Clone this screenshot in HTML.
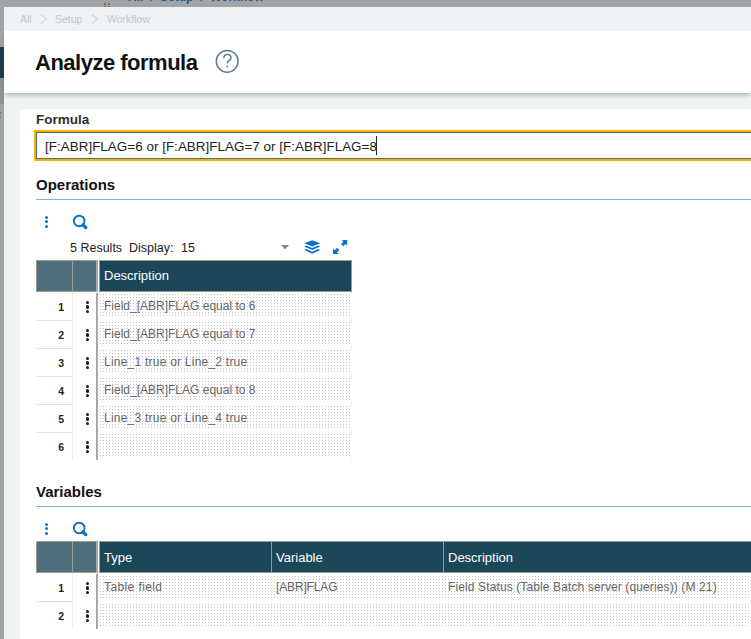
<!DOCTYPE html>
<html><head><meta charset="utf-8">
<style>
*{box-sizing:border-box;margin:0;padding:0}
html,body{width:751px;height:639px;overflow:hidden}
body{position:relative;background:#a2a3a5;font-family:"Liberation Sans",sans-serif;color:#222}
.a{position:absolute}
.nw{white-space:nowrap}
#topcrumb{left:128px;top:-10px;font-size:12px;color:#1a5a94;font-weight:bold}
#modal{left:4px;top:7px;width:747px;height:632px;background:#eff3f4}
#crumb{left:4px;top:7px;width:747px;height:24px;background:#f0f3f5}
.cr{top:13px;font-size:10.5px;color:#c2c7cb}
#header{left:4px;top:31px;width:747px;height:62px;background:#fff;box-shadow:0 3px 4px -1px rgba(30,50,60,.34)}
#title{left:35px;top:50px;letter-spacing:-0.5px;font-size:22px;font-weight:bold;color:#111}
#help{left:215px;top:49px;width:25px;height:25px;border:1.5px solid #66869a;border-radius:50%;color:#66869a;font-size:17px;text-align:center;line-height:22px}
#panel{left:20px;top:109px;width:731px;height:530px;background:#fff}
.lbl{font-size:13.5px;font-weight:bold;color:#2e2e2e}
.h2{font-size:15px;font-weight:bold;color:#111}
.uline{height:1px;background:#7fb5e2}
#inp{left:34px;top:130px;width:720px;height:31px;border:2px solid #f8b100;}
#inp div{position:absolute;left:0;top:0;right:0;bottom:0;border:1px solid #4e6b78;background:#fff}
#inp span{position:absolute;left:8px;top:6px;font-size:13.4px;letter-spacing:0.04px;color:#222}
.bd i{position:absolute;left:0.6px;width:3px;height:3px;border-radius:50%;background:#0e72c4}
.kd i{position:absolute;left:0.2px;width:3.3px;height:3.3px;border-radius:50%;background:#1a1a1a}
.th{background:#1a4859;height:32px;border:1px solid #979b8e}
.tn{background:#4f6e7b;height:32px;border:1px solid #9a9e90}
.dot{background:linear-gradient(to bottom,transparent 1px,#fff 1px) 0 0/3px 3px,linear-gradient(to right,transparent 1px,#fff 1px) 0 0/3px 3px,#c4c4c4}
.cell{font-size:12px;color:#666}
.hc{font-size:13px;color:#fff}
.rn{font-size:10.5px;font-weight:bold;color:#222;text-align:right;width:20px}
.hl{height:1px;background:#e4e4e4}
.vl{width:1px;background:#ececec}
.gb{width:2px;background:#a6a6a6}
.sep{width:1px;background:#8d9a9a}
</style></head><body>
<div id="topcrumb" class="a nw">All &nbsp;/&nbsp; Setup &nbsp;/&nbsp; Workflow</div>
<div class="a" style="left:104px;top:3px;width:2px;height:2px;background:#707070"></div><div class="a" style="left:108px;top:3px;width:2px;height:2px;background:#707070"></div><div class="a" style="left:104px;top:6px;width:2px;height:1px;background:#707070"></div><div class="a" style="left:108px;top:6px;width:2px;height:1px;background:#707070"></div>
<div class="a" style="left:0;top:47px;width:4px;height:31px;background:#1f3c48"></div>
<div class="a" style="left:0;top:78px;width:4px;height:26px;background:#8b9599"></div>

<div class="a" style="left:0;top:112px;width:1px;height:1.5px;background:#7d7f80"></div><div class="a" style="left:0;top:116.5px;width:1px;height:1.5px;background:#7d7f80"></div>
<div id="modal" class="a"></div>
<div id="crumb" class="a"></div>
<span class="a cr nw" style="left:20px">All</span>
<span class="a cr nw" style="left:55px">Setup</span>
<span class="a cr nw" style="left:107px">Workflow</span>
<svg class="a" style="left:40px;top:14px" width="8" height="10" viewBox="0 0 8 10"><path d="M1 0.5L6.3 5L1 9.5" fill="none" stroke="#d2d6da" stroke-width="1.1"/></svg>
<svg class="a" style="left:91px;top:14px" width="8" height="10" viewBox="0 0 8 10"><path d="M1 0.5L6.3 5L1 9.5" fill="none" stroke="#d2d6da" stroke-width="1.1"/></svg>

<div id="panel" class="a"></div>
<div class="a lbl nw" style="left:36px;top:112px">Formula</div>
<div id="inp" class="a"><div><span class="nw">[F:ABR]FLAG=6 or [F:ABR]FLAG=7 or [F:ABR]FLAG=8</span></div></div>

<div class="a" style="left:376px;top:136px;width:1px;height:19px;background:#222"></div>
<!-- Operations -->
<div class="a h2 nw" style="left:36px;top:176px">Operations</div>
<div class="a uline" style="left:36px;top:199px;width:715px"></div>
<div class="a bd" style="left:44px;top:215px;width:4px;height:14px"><i style="top:0.6px"></i><i style="top:5.1px"></i><i style="top:9.5px"></i></div>
<svg class="a" style="left:72px;top:214px" width="17" height="16" viewBox="0 0 17 16"><circle cx="7.2" cy="7" r="5.3" fill="none" stroke="#0e72c4" stroke-width="1.9"/><line x1="11" y1="10.8" x2="13.8" y2="13.6" stroke="#0e72c4" stroke-width="3.3" stroke-linecap="round"/></svg>
<div class="a nw" style="left:70px;top:241px;font-size:12.5px;color:#222">5 Results &nbsp;Display:</div>
<div class="a nw" style="left:181px;top:241px;font-size:12.5px;color:#222">15</div>
<svg class="a" style="left:281px;top:245px" width="8" height="5" viewBox="0 0 8 5"><path d="M0 0H8L4 4.5Z" fill="#8a8a8a"/></svg>
<svg class="a" style="left:304px;top:240px" width="17" height="15" viewBox="0 0 17 15"><path d="M8.2 0.2L16.2 3.3L8.2 6.4L0.2 3.3Z" fill="#0e72c4"/><path d="M2.3 5.6L0.2 6.5L8.2 9.9L16.2 6.5L14.1 5.6L8.2 8.1Z" fill="#0e72c4"/><path d="M2.3 9.1L0.2 10L8.2 13.7L16.2 10L14.1 9.1L8.2 11.8Z" fill="#0e72c4"/></svg>
<svg class="a" style="left:333px;top:240px" width="15" height="15" viewBox="0 0 15 15"><path d="M8.6 -0.1H14.2V5.5L12.6 3.9L10.2 6.3L8 4.1L10.4 1.7Z" fill="#0e72c4"/><path d="M-0.1 8.4V14H5.5L3.9 12.4L6.3 10L4.1 7.8L1.7 10.2Z" fill="#0e72c4"/></svg>

<!-- ops table -->
<div class="a tn" style="left:36px;top:260px;width:37px"></div>
<div class="a tn" style="left:72px;top:260px;width:25px"></div>
<div class="a gb" style="left:96px;top:260px;height:32px;background:#aaaaa6"></div>
<div class="a th" style="left:99px;top:260px;width:253px"></div>
<div class="a hc nw" style="left:104px;top:268px">Description</div>
<div class="a vl" style="left:72px;top:292px;height:168px"></div>
<div class="a vl" style="left:351px;top:292px;height:168px"></div>
<div class="a gb" style="left:96px;top:293px;height:167px"></div>
<div class="a hl" style="left:36px;top:320px;width:36px"></div>
<div class="a hl" style="left:36px;top:348px;width:36px"></div>
<div class="a hl" style="left:36px;top:376px;width:36px"></div>
<div class="a hl" style="left:36px;top:404px;width:36px"></div>
<div class="a hl" style="left:36px;top:432px;width:36px"></div>
<div class="a dot" style="left:100px;top:294px;width:252px;height:24px"></div>
<div class="a dot" style="left:100px;top:322px;width:252px;height:24px"></div>
<div class="a dot" style="left:100px;top:350px;width:252px;height:24px"></div>
<div class="a dot" style="left:100px;top:378px;width:252px;height:24px"></div>
<div class="a dot" style="left:100px;top:406px;width:252px;height:24px"></div>
<div class="a dot" style="left:100px;top:434px;width:252px;height:24px"></div>
<div class="a rn" style="left:44px;top:301px">1</div>
<div class="a rn" style="left:44px;top:329px">2</div>
<div class="a rn" style="left:44px;top:357px">3</div>
<div class="a rn" style="left:44px;top:385px">4</div>
<div class="a rn" style="left:44px;top:413px">5</div>
<div class="a rn" style="left:44px;top:441px">6</div>
<div class="a kd" style="left:85.8px;top:301px;width:4px;height:13px"><i style="top:0.1px"></i><i style="top:4.3px"></i><i style="top:8.5px"></i></div>
<div class="a kd" style="left:85.8px;top:329px;width:4px;height:13px"><i style="top:0.1px"></i><i style="top:4.3px"></i><i style="top:8.5px"></i></div>
<div class="a kd" style="left:85.8px;top:357px;width:4px;height:13px"><i style="top:0.1px"></i><i style="top:4.3px"></i><i style="top:8.5px"></i></div>
<div class="a kd" style="left:85.8px;top:385px;width:4px;height:13px"><i style="top:0.1px"></i><i style="top:4.3px"></i><i style="top:8.5px"></i></div>
<div class="a kd" style="left:85.8px;top:413px;width:4px;height:13px"><i style="top:0.1px"></i><i style="top:4.3px"></i><i style="top:8.5px"></i></div>
<div class="a kd" style="left:85.8px;top:441px;width:4px;height:13px"><i style="top:0.1px"></i><i style="top:4.3px"></i><i style="top:8.5px"></i></div>
<div class="a cell nw" style="left:104px;top:299px">Field_[ABR]FLAG equal to 6</div>
<div class="a cell nw" style="left:104px;top:327px">Field_[ABR]FLAG equal to 7</div>
<div class="a cell nw" style="left:104px;top:355px;letter-spacing:0.23px">Line_1 true or Line_2 true</div>
<div class="a cell nw" style="left:104px;top:383px">Field_[ABR]FLAG equal to 8</div>
<div class="a cell nw" style="left:104px;top:411px;letter-spacing:0.23px">Line_3 true or Line_4 true</div>

<!-- Variables -->
<div class="a h2 nw" style="left:36px;top:483px">Variables</div>
<div class="a uline" style="left:36px;top:506px;width:715px"></div>
<div class="a bd" style="left:44px;top:522px;width:4px;height:14px"><i style="top:0.6px"></i><i style="top:5.1px"></i><i style="top:9.5px"></i></div>
<svg class="a" style="left:72px;top:521px" width="17" height="16" viewBox="0 0 17 16"><circle cx="7.2" cy="7" r="5.3" fill="none" stroke="#0e72c4" stroke-width="1.9"/><line x1="11" y1="10.8" x2="13.8" y2="13.6" stroke="#0e72c4" stroke-width="3.3" stroke-linecap="round"/></svg>

<div class="a tn" style="left:36px;top:541px;width:37px"></div>
<div class="a tn" style="left:72px;top:541px;width:25px"></div>
<div class="a gb" style="left:96px;top:541px;height:32px;background:#aaaaa6"></div>
<div class="a th" style="left:99px;top:541px;width:660px"></div>
<div class="a sep" style="left:271px;top:542px;height:30px"></div>
<div class="a sep" style="left:443px;top:542px;height:30px"></div>
<div class="a hc nw" style="left:104px;top:550px">Type</div>
<div class="a hc nw" style="left:276px;top:550px">Variable</div>
<div class="a hc nw" style="left:448px;top:550px">Description</div>
<div class="a vl" style="left:72px;top:573px;height:56px"></div>
<div class="a gb" style="left:96px;top:574px;height:55px"></div>
<div class="a hl" style="left:36px;top:601px;width:36px"></div>
<div class="a dot" style="left:100px;top:576px;width:660px;height:24px"></div>
<div class="a dot" style="left:100px;top:604px;width:660px;height:24px"></div>
<div class="a rn" style="left:44px;top:582px">1</div>
<div class="a rn" style="left:44px;top:610px">2</div>
<div class="a kd" style="left:85.8px;top:582px;width:4px;height:13px"><i style="top:0.1px"></i><i style="top:4.3px"></i><i style="top:8.5px"></i></div>
<div class="a kd" style="left:85.8px;top:610px;width:4px;height:13px"><i style="top:0.1px"></i><i style="top:4.3px"></i><i style="top:8.5px"></i></div>
<div class="a cell nw" style="left:104px;top:580px;letter-spacing:0.4px">Table field</div>
<div class="a cell nw" style="left:276px;top:580px;letter-spacing:-0.15px">[ABR]FLAG</div>
<div class="a cell nw" style="left:448px;top:580px;letter-spacing:0.12px">Field Status (Table Batch server (queries)) (M 21)</div>

<div id="header" class="a"></div>
<div id="title" class="a nw">Analyze formula</div>
<svg class="a" style="left:215px;top:49px" width="25" height="25" viewBox="0 0 25 25"><circle cx="12.2" cy="12.3" r="10.9" fill="none" stroke="#5b7f95" stroke-width="1.5"/><path d="M8.8 9.2C8.8 6.9 10.4 5.6 12.4 5.6C14.4 5.6 16 6.9 16 8.8C16 10.6 14.7 11.3 13.6 12C12.7 12.6 12.4 13.1 12.4 14.6" fill="none" stroke="#5b7f95" stroke-width="1.5"/><circle cx="12.4" cy="17.5" r="1.1" fill="#5b7f95"/></svg>
</body></html>
